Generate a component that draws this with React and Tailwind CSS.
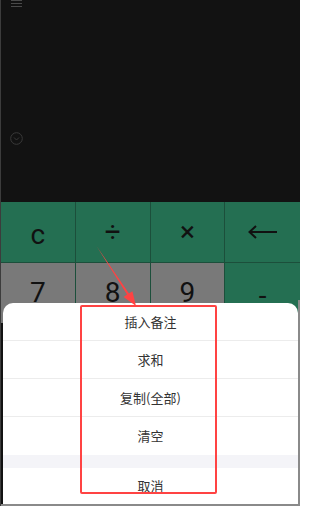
import React from "react";

const keyFont = { fontFamily: "Roboto, 'Liberation Sans', sans-serif" };

function Key({ children, green, last }) {
  return (
    <div
      className={`flex items-center justify-center h-[60px] text-[28px] leading-none text-[#111] ${
        green ? "bg-[#246f52]" : "bg-[#797979]"
      } ${last ? "" : "border-r border-[#1c4f3b]"}`}
      style={keyFont}
    >
      {children}
    </div>
  );
}

function Row({ children, divider = true }) {
  return (
    <div
      className={`flex items-center justify-center h-[38px] text-[13px] text-[#333] ${
        divider ? "border-b border-[#ececec]" : ""
      }`}
    >
      {children}
    </div>
  );
}

export default function App() {
  return (
    <div
      className="relative w-[300px] h-[506px] overflow-hidden bg-[#121212] border-l border-[#3c3c3c]"
      style={{ fontFamily: "'Noto Sans CJK SC', 'Noto Sans', sans-serif" }}
    >
      {/* top dark area */}
      <div className="relative h-[202px]">
        <div className="absolute left-[10px] top-0 flex flex-col gap-[2px]">
          <div className="w-[11px] h-[1px] bg-[#4a4a4a]" />
          <div className="w-[11px] h-[1px] bg-[#4a4a4a]" />
          <div className="w-[11px] h-[1px] bg-[#4a4a4a]" />
        </div>
        <svg
          className="absolute left-[9px] top-[132px]"
          width="13"
          height="13"
          viewBox="0 0 13 13"
          fill="none"
          stroke="#3a3a3a"
          strokeWidth="1"
        >
          <circle cx="6.5" cy="6.5" r="5.8" />
          <path d="M4 5.5 L6.5 8 L9 5.5" />
        </svg>
      </div>

      {/* keypad */}
      <div className="grid grid-cols-4 border-b border-[#1c4f3b]">
        <Key green>
          <span className="mt-[6px]">c</span>
        </Key>
        <Key green>÷</Key>
        <Key green>×</Key>
        <Key green last>
          <svg width="30" height="14" viewBox="0 0 30 14" fill="none" stroke="#111" strokeWidth="2">
            <path d="M1.5 7 H29" />
            <path d="M8 1 L1.5 7 L8 13" />
          </svg>
        </Key>
      </div>
      <div className="grid grid-cols-4">
        <Key>7</Key>
        <Key>8</Key>
        <Key>9</Key>
        <Key green last>
          <span className="mt-[6px]">-</span>
        </Key>
      </div>

      {/* action sheet overlay */}
      <div className="absolute left-[2px] right-[2px] top-[303px] bottom-[2px] bg-white rounded-t-[10px] flex flex-col">
        <Row>插入备注</Row>
        <Row>求和</Row>
        <Row>复制(全部)</Row>
        <Row divider={false}>清空</Row>
        <div className="h-[13px] bg-[#f4f4f8]" />
        <div className="flex-1 flex items-center justify-center text-[13px] text-[#333]">
          取消
        </div>
      </div>
      <div className="absolute left-0 right-0 bottom-0 h-[2px] bg-[#8a8a8a]" />
      <div className="absolute right-0 top-[300px] bottom-0 w-[2px] bg-[#8a8a8a]" />

      {/* annotation box */}
      <div className="absolute left-[79px] top-[305px] w-[137px] h-[189px] border-2 border-[#ff4343] rounded-[2px]" />

      {/* annotation arrow */}
      <svg className="absolute left-0 top-0 pointer-events-none" width="300" height="506">
        <polygon
          points="95.5,246 128,293.4 131.4,291.3 135,306 122.6,296.9 126,294.6"
          fill="#ff4343"
        />
      </svg>
    </div>
  );
}
